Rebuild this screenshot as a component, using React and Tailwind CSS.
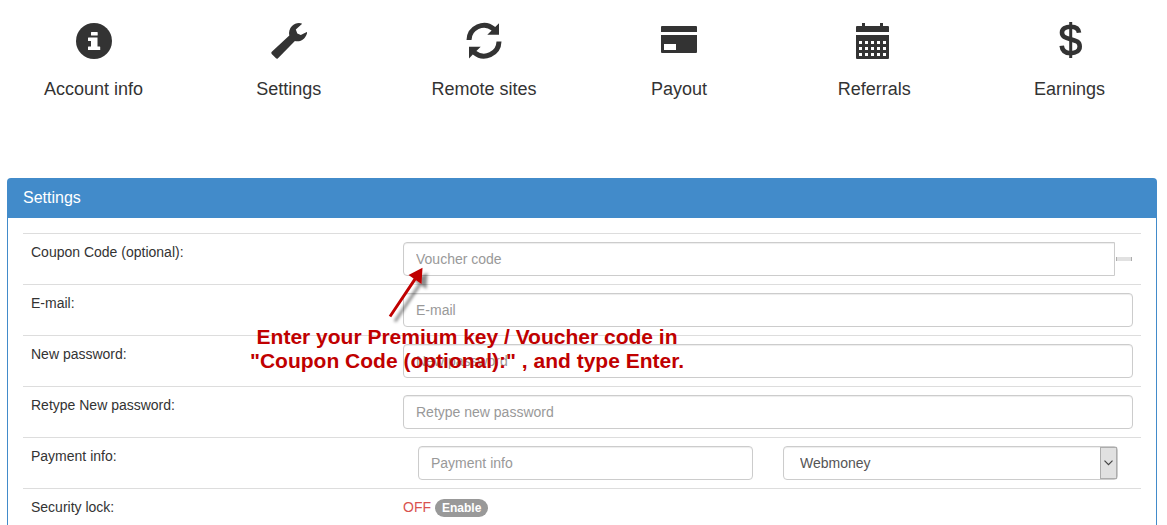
const fieldClass =
  'block h-[34px] w-full min-w-0 border border-[#ccc] bg-white px-3 text-sm text-[#555] shadow-[inset_0_1px_1px_rgba(0,0,0,0.075)] placeholder:text-[#999] focus:outline-none focus:border-[#66afe9]';

function Icon({ children }) {
  return (
    <svg viewBox="0 0 36 36" className="size-9 overflow-visible" fill="currentColor" aria-hidden="true">
      {children}
    </svg>
  );
}

function InfoIcon() {
  return (
    <Icon>
      <circle cx="18" cy="18" r="18" />
      <path fill="#fff" d="M15 9.500q0-.5.5-.5H21.200q.5 0 .5.5v2.500q0 .5-.5.5h-5.700q-.5 0-.5-.5zM12.500 14.500H21.500V23.500h2.200q.5 0 .5.5V27H12v-3q0-.5.5-.5H15V18h-2.500q-.5 0-.5-.5V15q0-.5.5-.5z" />
    </Icon>
  );
}

function WrenchIcon() {
  return (
    <Icon>
      <path d="M31.200.7C28-.6 23.800.2 21 3C18.500 5.500 17.500 9 18.300 12.600L.8 28.800Q-.3 29.800.7 30.900L5 35.300Q6 36.300 7 35.200L23.900 17.900C26.800 18.700 30.500 18 33.100 15.400C35.700 12.800 36.600 9.200 35.800 9L29.800 12L26.300 10.600L24.800 6.500Z" />
    </Icon>
  );
}

function RefreshIcon() {
  return (
    <Icon>
      <path d="M.5 17A17.500 17.500 0 0 1 29.200 4L33 .2V11.700H21.300L25.600 7.500A12.500 12.500 0 0 0 5.500 17Z" />
      <path d="M35.500 18.400A17.500 17.500 0 0 1 6.800 31.400L3 35.500V23.700H14.700L10.400 27.900A12.500 12.500 0 0 0 30.500 18.400Z" />
    </Icon>
  );
}

function CardIcon() {
  return (
    <Icon>
      <path d="M1 3h34q1 0 1 1v5H0V4q0-1 1-1zM0 12h36v17q0 1-1 1H1q-1 0-1-1zM3 21v6h12v-6z" fillRule="evenodd" />
    </Icon>
  );
}

function CalendarIcon() {
  return (
    <Icon>
      <path d="M6 3V0h3v3h15V0h3v3h5q1 0 1 1v5H0V4q0-1 1-1zM0 12h33v23q0 1-1 1H1q-1 0-1-1z" />
      <path
        fill="#fff"
        d="M3 18h3v3H3zM9 18h3v3H9zM15 18h3v3h-3zM21 18h3v3h-3zM27 18h3v3h-3zM3 24h3v3H3zM9 24h3v3H9zM15 24h3v3h-3zM21 24h3v3h-3zM27 24h3v3h-3zM3 30h3v3H3zM9 30h3v3H9zM15 30h3v3h-3zM21 30h3v3h-3zM27 30h3v3h-3z"
      />
    </Icon>
  );
}

function DollarIcon() {
  return (
    <Icon>
      <path
        d="M28 9.800C27.600 5 24.500 3.700 19.700 3.700C14.500 3.700 11 5.700 11 9.500C11 13.500 14 14.700 19.700 16.200C25.500 17.700 28.700 19 28.700 23.600C28.700 27.800 25 30.200 19.700 30.200C14.300 30.200 11.200 28 10.700 22.800"
        fill="none"
        stroke="currentColor"
        strokeWidth="4.600"
      />
      <path d="M18.200-1h3v36h-3z" />
    </Icon>
  );
}

const sections = [
  { name: 'Account info', Glyph: InfoIcon },
  { name: 'Settings', Glyph: WrenchIcon },
  { name: 'Remote sites', Glyph: RefreshIcon },
  { name: 'Payout', Glyph: CardIcon },
  { name: 'Referrals', Glyph: CalendarIcon },
  { name: 'Earnings', Glyph: DollarIcon },
];

function Row({ label, htmlFor, children }) {
  return (
    <div className="flex border-t border-[#ddd]">
      <div className="w-[372px] shrink-0 p-2">
        <label htmlFor={htmlFor}>{label}</label>
      </div>
      <div className="min-w-0 flex-1 p-2">{children}</div>
    </div>
  );
}

function Hint() {
  return (
    <div className="pointer-events-none absolute left-[242px] top-[83px] text-[#c00000]">
      <svg viewBox="0 0 60 60" className="mb-[3px] ml-[135px] size-[60px] overflow-visible" fill="currentColor" aria-hidden="true">
        <defs>
          <filter id="hint-shadow" x="-30%" y="-30%" width="170%" height="170%">
            <feDropShadow dx="5" dy="5" stdDeviation="1.5" floodColor="#000" floodOpacity="0.45" />
          </filter>
        </defs>
        <path
          filter="url(#hint-shadow)"
          d="M37.500 5.700L23.500 13L28.600 16.500L3.800 53.700L6.200 55.300L31.100 18.200L36.500 22Z"
        />
      </svg>
      <p className="text-center text-[21px] font-bold leading-6 whitespace-nowrap">
        Enter your Premium key / Voucher code in
        <br />
        "Coupon Code (optional):" , and type Enter.
      </p>
    </div>
  );
}

export default function App() {
  return (
    <div className="flex min-h-screen flex-col overflow-x-hidden bg-white font-['Liberation_Sans',Arial,sans-serif] text-sm leading-5 text-[#333]">
      <nav className="-ml-1 grid grid-cols-6 pt-[23px]">
        {sections.map(({ name, Glyph }) => (
          <a key={name} href="#" className="flex flex-col items-center gap-5 text-lg leading-5">
            <Glyph />
            {name}
          </a>
        ))}
      </nav>

      <main className="relative ml-[7px] mr-[10px] mt-[79px] flex grow flex-col rounded-t border-x border-t border-[#428bca]">
        <h1 className="bg-[#428bca] px-[15px] pb-[10px] pt-[9px] text-base leading-5 text-white">Settings</h1>
        <form className="p-[15px] pb-0" onSubmit={(e) => e.preventDefault()}>
          <Row label="Coupon Code (optional):" htmlFor="coupon">
            <div className="flex items-center gap-px">
              <input id="coupon" type="text" placeholder="Voucher code" className={`${fieldClass} flex-1 rounded-l`} />
              <button type="submit" aria-label="Apply" className="mr-px h-1 w-4 border-x border-[#adadad] bg-[#e1e1e1]" />
            </div>
          </Row>
          <Row label="E-mail:" htmlFor="email">
            <input id="email" type="email" placeholder="E-mail" className={`${fieldClass} rounded`} />
          </Row>
          <Row label="New password:" htmlFor="new-password">
            <input id="new-password" type="password" placeholder="New password" className={`${fieldClass} rounded`} />
          </Row>
          <Row label="Retype New password:" htmlFor="retype-password">
            <input id="retype-password" type="password" placeholder="Retype new password" className={`${fieldClass} rounded`} />
          </Row>
          <Row label="Payment info:" htmlFor="payment">
            <div className="grid grid-cols-2 gap-[30px] px-[15px]">
              <input id="payment" type="text" placeholder="Payment info" className={`${fieldClass} rounded`} />
              <div className="relative">
                <select aria-label="Payment method" className={`${fieldClass} appearance-none rounded pl-4`}>
                  <option>Webmoney</option>
                </select>
                <span className="pointer-events-none absolute inset-y-px right-px flex w-[17px] items-center justify-center border border-[#adadad] bg-[#e1e1e1]">
                  <svg viewBox="0 0 9 6" className="h-[6px] w-[9px]" fill="none" stroke="#444" strokeWidth="1.2" aria-hidden="true">
                    <path d="M.5.700L4.500 4.700L8.500.7" />
                  </svg>
                </span>
              </div>
            </div>
          </Row>
          <Row label="Security lock:" htmlFor="lock">
            <div className="flex items-center gap-1">
              <span className="text-[#d9534f]">OFF</span>
              <button id="lock" type="button" className="mt-px h-[18px] rounded-full bg-[#999] px-[7px] text-xs font-bold leading-none text-white">
                Enable
              </button>
            </div>
          </Row>
        </form>
        <Hint />
      </main>
    </div>
  );
}
